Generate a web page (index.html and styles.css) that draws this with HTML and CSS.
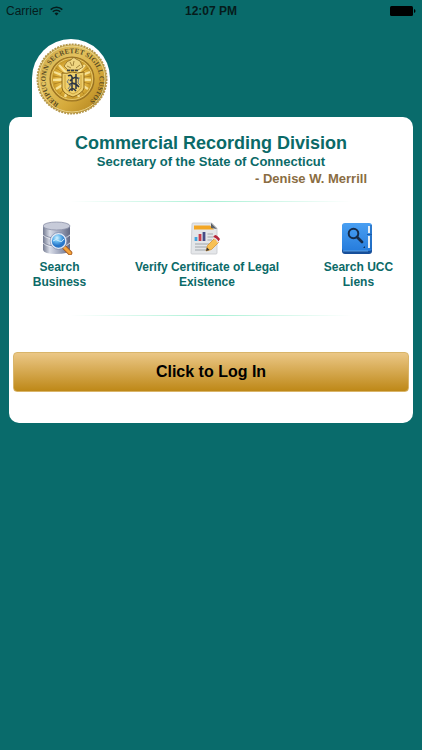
FILE: index.html
```html
<!DOCTYPE html>
<html lang="en">
<head>
  <meta charset="UTF-8">
  <meta name="viewport" content="width=device-width, initial-scale=1.0">
  <title>Commercial Recording Division</title>
  <link rel="stylesheet" href="styles.css">
</head>
<body>

<!-- Status Bar -->
<div class="status-bar">
  <div class="carrier">
    <span>Carrier</span>
    <svg width="13" height="10" viewBox="0 0 13 10" fill="none" stroke="#061c1c" stroke-width="1.6">
      <path d="M0.7 3.6 A8.4 8.4 0 0 1 12.3 3.6"/>
      <path d="M2.8 5.8 A5.3 5.3 0 0 1 10.2 5.8"/>
      <path d="M6.5 9.6 L4.5 7.5 A2.9 2.9 0 0 1 8.5 7.5 Z" fill="#061c1c" stroke="none"/>
    </svg>
  </div>
  <span class="clock">12:07 PM</span>
  <div class="battery">
    <svg width="26" height="10" viewBox="0 0 26 10">
      <rect x="0" y="0" width="23" height="10" rx="1.5" fill="#000"/>
      <path d="M24 3 Q25.5 3.5 25.5 5 Q25.5 6.5 24 7 Z" fill="#000"/>
    </svg>
  </div>
</div>

<main class="page">
  <!-- State Seal -->
  <div class="seal-tab">
    <svg width="72" height="72" viewBox="0 0 72 72" role="img" aria-label="State seal">
      <defs>
        <linearGradient id="gold" x1="0" y1="0" x2="1" y2="1">
          <stop offset="0" stop-color="#c9a544"/>
          <stop offset="0.35" stop-color="#e3c25f"/>
          <stop offset="0.65" stop-color="#d5a93a"/>
          <stop offset="1" stop-color="#a97a17"/>
        </linearGradient>
        <radialGradient id="center">
          <stop offset="0" stop-color="#f6dc7c"/>
          <stop offset="0.7" stop-color="#dfb03a"/>
          <stop offset="1" stop-color="#b98c22"/>
        </radialGradient>
        <path id="ring" d="M23 60.500 A27 27 0 1 1 50 60.500"/>
      </defs>
      <circle cx="36" cy="36" r="34.5" fill="url(#gold)" stroke="#b4974c" stroke-width="2" stroke-dasharray="2 1"/>
      <circle cx="36" cy="36" r="33" fill="none" stroke="#e8d28a" stroke-width="1"/>
      <circle cx="36" cy="36" r="22" fill="url(#center)" stroke="#967025" stroke-width="1.2"/>
      <circle cx="36" cy="36" r="20.5" fill="none" stroke="#f0d67c" stroke-width="0.8"/>
      <g stroke="#fff0ac" stroke-width="2.4" opacity="0.8">
        <path d="M36 36 L18 29 M36 36 L17 37 M36 36 L20 46 M36 36 L23 22 M36 36 L29 54 M36 36 L54 29 M36 36 L55 37 M36 36 L52 46 M36 36 L49 22 M36 36 L43 54"/>
      </g>
      <g stroke="#9c701a" stroke-width="0.8" opacity="0.8">
        <path d="M36 36 L17 33 M36 36 L18 41 M36 36 L20 25 M36 36 L24 51 M36 36 L55 33 M36 36 L54 41 M36 36 L52 25 M36 36 L48 51"/>
      </g>
      <text class="seal-text"><textPath href="#ring">REIPUCONN SECRETET SIGILL CUSTOS</textPath></text>
      <!-- eagle and shield -->
      <path d="M28 23 Q31 17 35 17 Q37 13 40 16 L44 18 L47 24 L42 27 L32 27 Z" fill="#efd681" stroke="#80601d" stroke-width="0.7"/>
      <path d="M34 19 L36 23 M38 18 L37 23 M31 23 L35 25 M44 22 L40 25" stroke="#80601d" stroke-width="0.7" fill="none"/>
      <path d="M31 27.5 H43" stroke="#333a45" stroke-width="1.4" stroke-dasharray="3 1"/>
      <path d="M26 30 Q31 31 36 29 Q41 31 48 29 V45 Q47 50 37 54 Q27 51 26 45 Z" fill="#efd06d" stroke="#8e6819" stroke-width="1"/>
      <path d="M29 32 V45 Q31 49 37 51 Q43 49 45 45 V32" fill="none" stroke="#c49731" stroke-width="0.8"/>
      <g fill="none" stroke="#2b3443" stroke-width="1.5">
        <path d="M32 33 Q35 31 36 34 V48 M40 31 V46 M34 38 Q39 32 43 36 M33 42 Q38 38 43 44 M33 48 Q36 43 40 48"/>
      </g>
      <path d="M33 36 L31 39 L35 42 L32 46 M43 34 L42 40 L44 42" fill="none" stroke="#657080" stroke-width="0.9"/>
    </svg>
  </div>

  <section class="card">
    <header class="heading">
      <h1>Commercial Recording Division</h1>
      <h2>Secretary of the State of Connecticut</h2>
      <p class="secretary">- Denise W. Merrill</p>
    </header>

    <hr class="divider">

    <nav class="menu">
      <a href="#" class="menu-item">
        <svg width="34" height="34" viewBox="3 0 34 34">
          <defs>
            <linearGradient id="metal">
              <stop offset="0" stop-color="#747b91"/>
              <stop offset="0.25" stop-color="#d9dde8"/>
              <stop offset="0.5" stop-color="#b1b7ca"/>
              <stop offset="1" stop-color="#626984"/>
            </linearGradient>
            <radialGradient id="lens" cx="0.4" cy="0.3">
              <stop offset="0" stop-color="#d6f3ff"/>
              <stop offset="0.5" stop-color="#65b8ef"/>
              <stop offset="1" stop-color="#2876c9"/>
            </radialGradient>
          </defs>
          <path d="M3 5 V29 Q4 33 16 33 Q29 33 30 29 V5 Z" fill="url(#metal)"/>
          <ellipse cx="16.5" cy="5" rx="13.5" ry="4" fill="#c7cbd9" stroke="#8b91a7" stroke-width="0.8"/>
          <path d="M3 13 Q7 17 16 17 Q26 17 30 13 M3 21 Q7 25 16 25 Q26 25 30 21" fill="none" stroke="#777e96" stroke-width="0.8"/>
          <path d="M3 14 Q7 18 16 18 Q26 18 30 14 M3 22 Q7 26 16 26 Q26 26 30 22" fill="none" stroke="#eef0f6" stroke-width="0.8"/>
          <path d="M24 26 L30 32" stroke="#a65a20" stroke-width="4.6" stroke-linecap="round"/>
          <path d="M24 26 L30 32" stroke="#f5a43b" stroke-width="3" stroke-linecap="round"/>
          <circle cx="18.5" cy="20" r="7.5" fill="url(#lens)" stroke="#e4eaf5" stroke-width="1.6"/>
          <circle cx="18.5" cy="20" r="8.4" fill="none" stroke="#6e82ab" stroke-width="0.6"/>
          <path d="M13 20 Q16 17 19 20 Q22 22 24 18" fill="none" stroke="#c8ecff" stroke-width="1"/>
        </svg>
        <span>Search<br>Business</span>
      </a>
      <a href="#" class="menu-item">
        <svg width="34" height="34" viewBox="1 0 34 34">
          <path d="M3 3 Q3 2 4 2 H23 L28 7 V32 Q28 33 27 33 H3 Q2 33 2 32 Z" fill="#e4e6e9" stroke="#c4c6ca" stroke-width="0.8"/>
          <path d="M5 4.5 H21 L25 8.5 H5 Z" fill="#f3a624"/>
          <path d="M22 2 L28 8 L22 7 Z" fill="#5d6167"/>
          <path d="M7 16 V20" stroke="#42a4dc" stroke-width="2.8"/>
          <path d="M11 13 V20" stroke="#c83d4c" stroke-width="2.8"/>
          <path d="M15 11 V20" stroke="#454c86" stroke-width="2.8"/>
          <path d="M18.5 13 H24 M18.5 16 H24 M18.5 19 H23 M6 23 H20 M6 26 H18 M6 29 H17" stroke="#a0a5ac" stroke-width="1.2"/>
          <path d="M17 30 L18.5 24.5 L25.5 17.5 L29.5 21.5 L22.5 28.5 Z" fill="#f8c053" stroke="#d48b28" stroke-width="0.7"/>
          <path d="M24 16 L26 14 Q28 14 31 18 L29.500 20.5 Q28 17 24 16 Z" fill="#b7283d"/>
          <path d="M24.5 17 Q28 18 29 21.5" fill="none" stroke="#e9dcda" stroke-width="1.2"/>
          <path d="M17 30 L18 26.5 L20.5 29 Z" fill="#333"/>
        </svg>
        <span>Verify Certificate of Legal<br>Existence</span>
      </a>
      <a href="#" class="menu-item">
        <svg width="34" height="34" viewBox="0 0 34 34">
          <defs>
            <linearGradient id="book" x1="0" y1="0" x2="0" y2="1">
              <stop offset="0" stop-color="#499ff2"/>
              <stop offset="1" stop-color="#267cdc"/>
            </linearGradient>
          </defs>
          <rect x="1" y="3" width="30" height="30" rx="3" fill="#174f9a"/>
          <rect x="1" y="2" width="30" height="28" rx="3" fill="url(#book)"/>
          <path d="M27 5 H29 V12 H27 Z M27 15 H29 V27 H27 Z" fill="#e4eef7"/>
          <path d="M30 4 V28 M26 13.5 H31" stroke="#195cac" stroke-width="1"/>
          <circle cx="12.5" cy="12.5" r="4.8" fill="none" stroke="#152b49" stroke-width="2"/>
          <path d="M16 16 L21 21" stroke="#152b49" stroke-width="2.8" stroke-linecap="round"/>
          <path d="M22 27 L24 25 V27 Z" fill="#12345f"/>
          <path d="M2 30 H27" stroke="#6faee9" stroke-width="0.8"/>
        </svg>
        <span>Search UCC<br>Liens</span>
      </a>
    </nav>

    <hr class="divider">

    <button type="button" class="login-btn">Click to Log In</button>
  </section>
</main>

</body>
</html>
```

FILE: styles.css
```css
* {
  box-sizing: border-box;
}

body {
  margin: 0;
  min-height: 100vh;
  background-color: #096b6b;
  font-family: "Liberation Sans", Arial, sans-serif;
}

/* --- Status Bar --- */
.status-bar {
  display: grid;
  grid-template-columns: 1fr auto 1fr;
  align-items: center;
  height: 22px;
  padding: 0 6px;
  font-size: 12px;
  color: #061c1c;
}

.carrier {
  display: flex;
  align-items: center;
  gap: 7px;
}

.clock {
  font-weight: bold;
}

.battery {
  display: flex;
  justify-content: flex-end;
}

/* --- Page --- */
.page {
  padding: 17px 9px 0;
}

.seal-tab {
  width: 78px;
  height: 78px;
  margin-left: 23px;
  padding: 4px 0 0 4px;
  background-color: #fff;
  border-radius: 39px 39px 0 0;
}

.seal-tab svg {
  display: block;
}

.seal-text {
  font-family: "Liberation Serif", serif;
  font-size: 7px;
  font-weight: bold;
  fill: #5b4d25;
}

.card {
  padding: 15px 0 31px;
  background-color: #fff;
  border-radius: 10px;
}

.heading {
  text-align: center;
  color: #0b6a68;
}

.heading h1 {
  margin: 0;
  font-size: 18px;
  line-height: 22px;
}

.heading h2 {
  margin: 0;
  font-size: 13px;
  line-height: 16px;
}

.secretary {
  margin: 0;
  padding-right: 46px;
  font-size: 13px;
  font-weight: bold;
  line-height: 17px;
  text-align: right;
  color: #8a6d42;
}

.divider {
  width: 70%;
  height: 1px;
  margin: 14px auto;
  border: none;
  background: linear-gradient(to right, #fff, #a8f0d4, #fff);
}

/* --- Menu --- */
.menu {
  display: grid;
  grid-template-columns: 25% 48% 27%;
  margin-top: 19px;
}

.menu-item {
  display: flex;
  flex-direction: column;
  align-items: center;
  gap: 5px;
  font-size: 12px;
  font-weight: bold;
  line-height: 15px;
  text-align: center;
  text-decoration: none;
  color: #0b6a68;
}

.menu + .divider {
  margin: 25px auto 36px;
}

/* --- Login --- */
.login-btn {
  display: block;
  width: calc(100% - 8px);
  height: 40px;
  margin: 0 auto;
  border: 1px solid #d9b56a;
  border-radius: 4px;
  background: linear-gradient(#ebc786, #be8817);
  font-family: inherit;
  font-size: 16px;
  font-weight: bold;
  color: #000;
  cursor: pointer;
}
```
